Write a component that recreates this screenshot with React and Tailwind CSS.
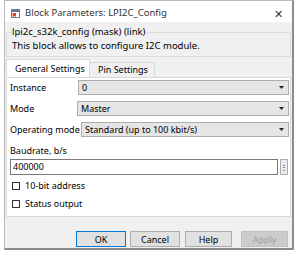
import { useState } from 'react';

const font = { fontFamily: '"Noto Sans", "Open Sans", Arial, sans-serif' };

function Arrow() {
  return (
    <svg width="5" height="3" viewBox="0 0 5 3" className="shrink-0">
      <path d="M0 0h5L2.5 3z" fill="#222" />
    </svg>
  );
}

function Select({ label, value, labelW }) {
  return (
    <div className="flex items-center h-[15px]">
      <span className={`${labelW} shrink-0 whitespace-nowrap`}>{label}</span>
      <div className="flex-1 flex items-center justify-between h-[15px] border border-[#adadad] bg-[#e5e5e5] pl-[3px] pr-[4px]">
        <span className="leading-none">{value}</span>
        <Arrow />
      </div>
    </div>
  );
}

function Check({ label }) {
  const [on, setOn] = useState(false);
  return (
    <label className="flex items-center h-[12px]" onClick={() => setOn(!on)}>
      <span className="w-[8px] h-[8px] border border-[#333] bg-white ml-[2px] mr-[5px]" />
      <span>{label}</span>
    </label>
  );
}

export default function App() {
  return (
    <div className="w-[298px] h-[256px] bg-white overflow-hidden text-[9px] leading-[12px] text-black" style={font}>
      <div className="ml-[4px] w-[290px] h-[250px] flex flex-col border border-[#b9b9b9] border-r-[2px] border-b-[2px] border-r-[#8c8c8c] border-b-[#8c8c8c] bg-[#f0f0f0]">
        <div className="h-[21px] shrink-0 bg-white flex items-center pl-[6px] pr-[9px] pt-[3px]">
          <svg width="9" height="9" viewBox="0 0 9 9" className="mr-[5px]">
            <rect x="0.5" y="0.5" width="8" height="8" fill="#fff" stroke="#6b7f99" />
            <rect x="1" y="1" width="7" height="2" fill="#5d7796" />
            <rect x="1.5" y="4" width="3.5" height="3.5" fill="#d9472b" />
          </svg>
          <span className="text-[9.5px] text-[#333]">Block Parameters: LPI2C_Config</span>
          <span className="ml-auto text-[11px] leading-none text-[#333] font-light">✕</span>
        </div>
        <fieldset className="mx-[1px] mt-[4px] h-[31px] border border-[#dcdcdc] px-[5px]">
          <legend className="px-0 leading-[12px] text-[9.5px]">lpi2c_s32k_config (mask) (link)</legend>
          <div className="mt-[2px] text-[9.5px]">This block allows to configure I2C module.</div>
        </fieldset>
        <div className="flex mt-[4px] pl-[1px] h-[16px] items-end">
          <div className="w-[84px] h-[18px] pl-[8px] pt-[1px] flex items-center bg-white border border-[#d9d9d9] border-b-0 relative z-10">General Settings</div>
          <div className="w-[65px] h-[15px] pl-[8px] flex items-center border border-[#d9d9d9] border-b-0 border-l-0">Pin Settings</div>
        </div>
        <div className="mx-[1px] h-[140px] bg-white border border-[#d9d9d9] pl-[3px] pr-[1px] pt-[2px] flex flex-col">
          <div className="flex flex-col gap-[6px]">
            <Select label="Instance" value="0" labelW="w-[68px]" />
            <Select label="Mode" value="Master" labelW="w-[67px]" />
            <Select label="Operating mode" value="Standard (up to 100 kbit/s)" labelW="w-[71px]" />
          </div>
          <div className="mt-[7px] h-[13px] flex items-center">Baudrate, b/s</div>
          <div className="mt-[2px] flex items-center gap-[2px]">
            <div className="flex-1 h-[16px] border border-[#7a7a7a] bg-white pl-[2px] flex items-center">400000</div>
            <div className="w-[8px] h-[16px] mr-[1px] border border-[#adadad] bg-[#ececec] flex items-center justify-center text-[8px] leading-none">⋮</div>
          </div>
          <div className="mt-[5px] flex flex-col gap-[6px]">
            <Check label="10-bit address" />
            <Check label="Status output" />
          </div>
        </div>
        <div className="flex-1 flex items-end pl-[71px] pb-[1px]">
          <button className="w-[50px] h-[16px] border border-[#0078d7] bg-[#e1e1e1] leading-none">OK</button>
          <button className="ml-[4px] w-[50px] h-[16px] border border-[#adadad] bg-[#e1e1e1] leading-none">Cancel</button>
          <button className="ml-[5px] w-[47px] h-[16px] border border-[#adadad] bg-[#e1e1e1] leading-none">Help</button>
          <button className="ml-[9px] w-[47px] h-[16px] border border-[#bfbfbf] bg-[#cccccc] text-[#a0a0a0] leading-none">Apply</button>
        </div>
      </div>
    </div>
  );
}
